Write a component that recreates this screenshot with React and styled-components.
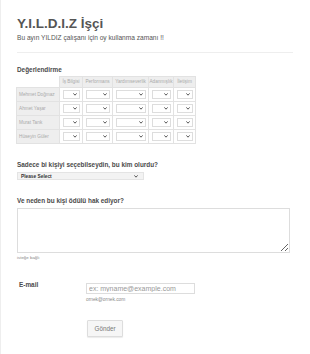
import React from 'react';
import styled, { createGlobalStyle } from 'styled-components';

const GlobalStyle = createGlobalStyle`
  html, body {
    margin: 0;
    padding: 0;
    background: #fff;
  }
  body {
    font-family: "Liberation Sans", Arial, sans-serif;
    -webkit-font-smoothing: antialiased;
  }
`;

const COLUMNS = [
  { label: 'İş Bilgisi', width: 23 },
  { label: 'Performans', width: 30 },
  { label: 'Yardımseverlik', width: 36 },
  { label: 'Adanmışlık', width: 25 },
  { label: 'İletişim', width: 22 },
];

const PEOPLE = ['Mehmet Doğmaz', 'Ahmet Yaşar', 'Murat Tarık', 'Hüseyin Güler'];

const Chevron = () => (
  <svg width="4" height="3" viewBox="0 0 4 3">
    <path d="M0.4 0.4 L2 2.2 L3.6 0.4" fill="none" stroke="#444" strokeWidth="0.9" />
  </svg>
);

const App = () => (
  <>
    <GlobalStyle />
    <Page>
      <Header>
        <Title>Y.I.L.D.I.Z İşçi</Title>
        <Subtitle>Bu ayın YILDIZ çalışanı için oy kullanma zamanı !!</Subtitle>
      </Header>

      <Section>
        <Label>Değerlendirme</Label>
        <Matrix>
          <colgroup>
            <col style={{ width: 43 }} />
            {COLUMNS.map((c) => (
              <col key={c.label} style={{ width: c.width }} />
            ))}
          </colgroup>
          <thead>
            <tr>
              <Corner />
              {COLUMNS.map((c) => (
                <HeadCell key={c.label}>{c.label}</HeadCell>
              ))}
            </tr>
          </thead>
          <tbody>
            {PEOPLE.map((p) => (
              <tr key={p}>
                <RowLabel>{p}</RowLabel>
                {COLUMNS.map((c) => (
                  <Cell key={c.label}>
                    <MiniSelect>
                      <Chevron />
                    </MiniSelect>
                  </Cell>
                ))}
              </tr>
            ))}
          </tbody>
        </Matrix>
      </Section>

      <Question>
        <Label>Sadece bi kişiyi seçebilseydin, bu kim olurdu?</Label>
        <Dropdown>
          <span>Please Select</span>
          <Chevron />
        </Dropdown>
      </Question>

      <Question>
        <Label>Ve neden bu kişi ödülü hak ediyor?</Label>
        <TextArea />
        <Hint>isteğe bağlı</Hint>
      </Question>

      <EmailRow>
        <SideLabel>E-mail</SideLabel>
        <div>
          <Input placeholder="ex: myname@example.com" />
          <Hint $size={4.8}>ornek@ornek.com</Hint>
        </div>
      </EmailRow>

      <SubmitRow>
        <Button>Gönder</Button>
      </SubmitRow>
    </Page>
  </>
);

const Page = styled.div`
  box-sizing: border-box;
  width: 310px;
  height: 354px;
  padding: 16px 17px 0 16px;
  border-left: 1px solid #eee;
  color: #555;
  overflow: hidden;
`;

const Header = styled.div`
  padding: 0 0 10px 0;
  border-bottom: 1px solid #eee;
  margin-bottom: 13px;
`;

const Title = styled.h1`
  margin: 0;
  font-size: 13.5px;
  line-height: 16px;
  font-weight: bold;
  color: #555;
`;

const Subtitle = styled.div`
  margin-top: 2px;
  font-size: 6.6px;
  line-height: 8px;
  color: #555;
`;

const Section = styled.div`
  margin-bottom: 17px;
`;

const Label = styled.div`
  font-size: 6.4px;
  line-height: 8px;
  font-weight: bold;
  color: #4a4a4a;
  margin-bottom: 2px;
`;

const Matrix = styled.table`
  table-layout: fixed;
  width: 180px;
  border-collapse: collapse;
  font-size: 4.7px;
  color: #aaa;
  margin-left: -1px;
`;

const Corner = styled.th`
  padding: 0;
`;

const HeadCell = styled.th`
  padding: 2px 0;
  line-height: 6px;
  background: #eee;
  border: 1px solid #e2e2e2;
  font-weight: normal;
  text-align: center;
  white-space: nowrap;
  overflow: hidden;
`;

const RowLabel = styled.td`
  padding: 2px 2px;
  line-height: 9px;
  background: #eee;
  border: 1px solid #e2e2e2;
  white-space: nowrap;
  overflow: hidden;
  text-align: left;
`;

const Cell = styled.td`
  padding: 2px 2px 2px 3px;
  line-height: 0;
  border: 1px solid #e2e2e2;
`;

const MiniSelect = styled.div`
  box-sizing: border-box;
  height: 9px;
  border: 1px solid #ddd;
  background: #fff;
  display: flex;
  align-items: center;
  justify-content: flex-end;
  padding-right: 2px;
`;

const Question = styled.div`
  margin-bottom: 17px;
`;

const Dropdown = styled.div`
  box-sizing: border-box;
  width: 127px;
  height: 8px;
  margin-top: 3px;
  border: 1px solid #e4e4e4;
  background: #f3f3f3;
  display: flex;
  align-items: center;
  justify-content: space-between;
  padding: 0 5px 0 3px;
  font-size: 4.8px;
  font-weight: bold;
  color: #333;
`;

const TextArea = styled.textarea`
  display: block;
  box-sizing: border-box;
  width: 273px;
  height: 45px;
  margin: 3px 0 0 0;
  padding: 0;
  border: 1px solid #ddd;
  background: #fff;
  resize: both;
  outline: none;
`;

const Hint = styled.div`
  margin-top: 2px;
  font-size: ${(p) => p.$size || 4.4}px;
  color: #888;
`;

const EmailRow = styled.div`
  display: flex;
  align-items: flex-start;
  margin-top: 5px;
`;

const SideLabel = styled.div`
  width: 67px;
  padding: 4px 0 0 2px;
  font-size: 6.4px;
  font-weight: bold;
  color: #4a4a4a;
`;

const Input = styled.input`
  box-sizing: border-box;
  width: 109px;
  height: 11px;
  margin: 0;
  padding: 0 2px;
  border: 1px solid #ddd;
  font-family: inherit;
  font-size: 7px;
  color: #555;
  outline: none;
  &::placeholder {
    color: #999;
  }
`;

const SubmitRow = styled.div`
  padding: 15px 0 0 70px;
`;

const Button = styled.button`
  box-sizing: border-box;
  width: 36px;
  height: 17px;
  padding: 0;
  border: 1px solid #ddd;
  border-radius: 1px;
  background: #f6f6f6;
  box-shadow: 0 1px 1px rgba(0, 0, 0, 0.08);
  font-family: inherit;
  font-size: 6.3px;
  color: #777;
`;

export default App;
